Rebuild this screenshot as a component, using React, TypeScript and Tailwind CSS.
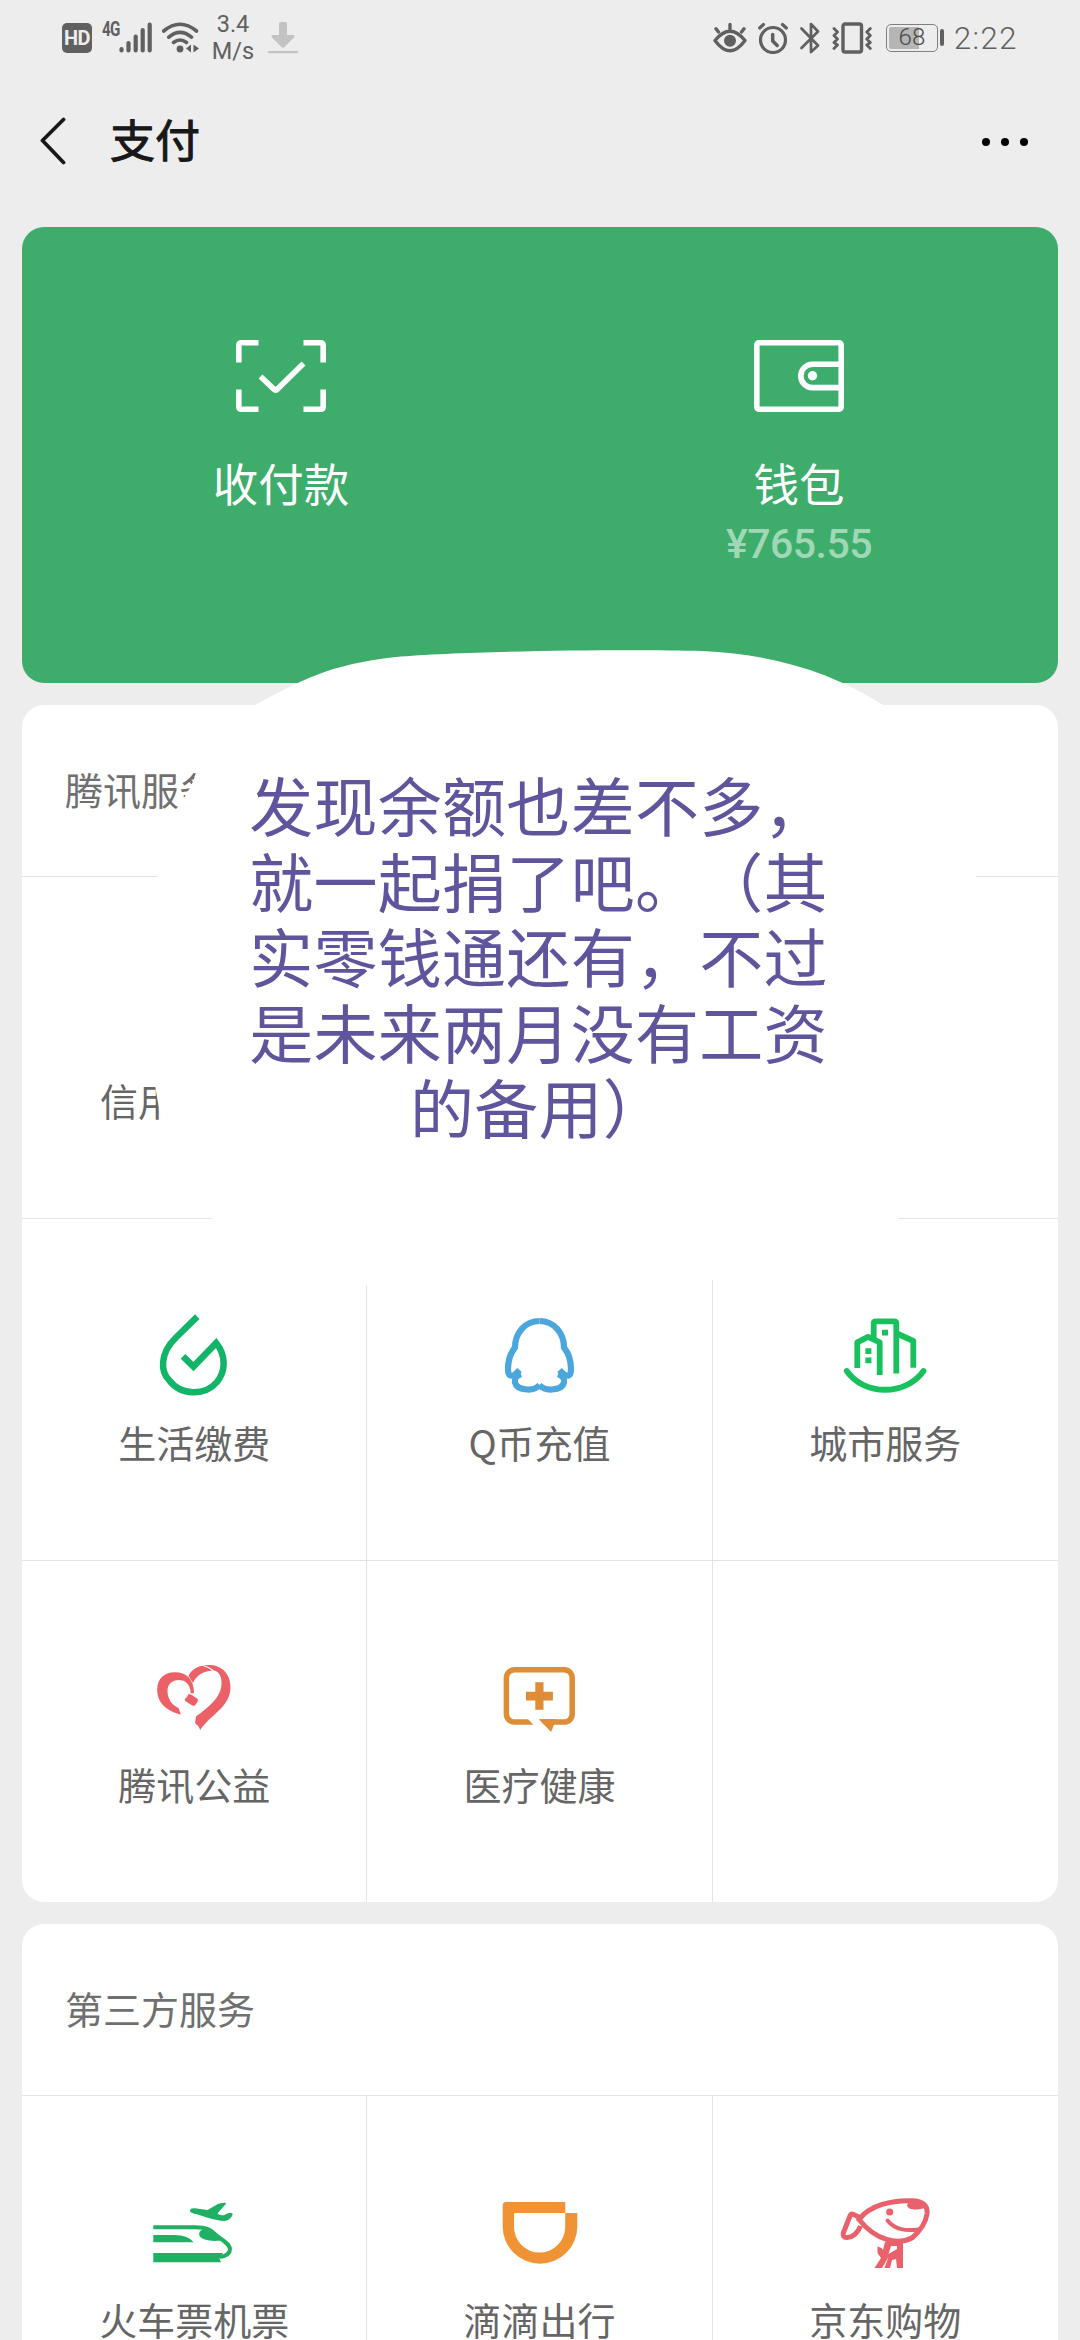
import { ReactNode } from 'react';

interface Service {
  label: string;
  icon: ReactNode;
}

function WaterIcon() {
  return (
    <svg viewBox="0 0 90 90" className="size-[90px]" fill="none" stroke="#12b568" strokeWidth="6.5">
      <path d="M48.3 6.7 27 27.500C10 44 12 62 20 70C32 86 56 86 68 72C77 61 77 45 67.200 33L44.5 56.6 34 46.4" strokeMiterlimit="10" />
    </svg>
  );
}

function PenguinIcon() {
  const half = (
    <>
      <path d="M45.5 11C31 11 21 23 21 37.5C15 45 14 52 14 59C14 67 18 68.500 25.500 60" />
      <path d="M27 64C18 67 18 78.500 33 79.500C39 79.800 43 78 45.700 75" />
    </>
  );
  return (
    <svg viewBox="0 0 90 90" className="size-[90px]" fill="none" stroke="#4ba6dc" strokeWidth="6.2">
      {half}
      <g transform="translate(91 0) scale(-1 1)">{half}</g>
    </svg>
  );
}

function CityIcon() {
  return (
    <svg viewBox="0 0 90 90" className="size-[90px]" fill="none" stroke="#19c05e" strokeWidth="5.8">
      <path d="M6.800 61C24 86 66 86 83.500 61" strokeLinecap="round" />
      <path d="M33.700 29V13.500Q33.700 11.300 36 11.300H54Q56.300 11.300 56.300 13.500V63.500" />
      <path d="M17.300 58V32.300L28 26.800 39.700 32.300V65" strokeLinejoin="round" />
      <path d="M57 23.500 73.300 31V57.800" strokeLinejoin="round" />
      <path d="M42 19.700h6v5.800h-6zM25.400 38.300h6v5.800h-6zM25.400 47.500h6v5.800h-6z" fill="#19c05e" stroke="none" />
    </svg>
  );
}

function HeartIcon() {
  return (
    <svg viewBox="0 0 90 90" className="size-[90px]" fill="#ec6168">
      <path d="M31.900 62.500C20 60 8.200 52 8.200 38C8.200 26 16 20.300 26 20.300C37 20.300 45 27 45 41L41.800 41.500C41.500 32 36 28 30 28C23 28 18.500 32 18.500 39C18.500 47 23 53 29.500 56Z" />
      <rect x="36" y="43.500" width="12.500" height="8.500" rx="3" transform="rotate(32 42 48)" />
      <path d="M36.500 46.500l2.500-4" stroke="#fff" strokeWidth="1" />
      <path d="M39.500 23.700C43 16 52 12.500 61 13C74 13.500 81.500 23 81.500 35C81.500 55 62 62 51.200 78C50 74 48 73 46 71L47 64.500C60 55 73 45 72.500 30C72.300 22 68 18 63.500 18.500C54 19 47 24 44 31Z" />
      <path d="M54 13.500Q60 15 64.500 18.800" fill="none" stroke="#fff" strokeWidth="1.200" />
    </svg>
  );
}

function MedicalIcon() {
  return (
    <svg viewBox="0 0 90 90" className="size-[90px]" fill="#de8c35">
      <rect x="12.400" y="17.800" width="65.800" height="52.300" rx="8" fill="none" stroke="#de8c35" strokeWidth="5.500" />
      <path d="M33.500 66.500H44.500L51 74H40.500Z" fill="#fff" />
      <path d="M45 67.300H62L60 72.800 57 80Z" />
      <path d="M41.300 30.300h8.200v9.400h9.400v8.700h-9.400v9.400h-8.200v-9.400H32v-8.700h9.300z" />
    </svg>
  );
}

function TrainIcon() {
  return (
    <svg viewBox="0 0 90 90" className="size-[90px]" fill="#20b064">
      <path d="M41 24C41 21.500 43 21 46 21.300L58.600 23C63 21 68 16.500 72 16.300C74 15.800 77 15.500 77 16.700L68.600 26.300C70 28.500 73 28.500 75.500 28C79 25.500 83 25.800 83.600 26.800C84 29 80 34 75.300 34C66 33.500 55 29.500 47 27Q41.500 26 41 24Z" />
      <path d="M4.300 40.300H46C58 40.300 62 43 68 49C75 54 81 58 81 62C81 67 77 69 71 70" fill="none" stroke="#20b064" strokeWidth="4" />
      <path d="M54 42C47 46 50 52 59 53.300C65 54.300 70 54 73 53L63 44Z" />
      <path d="M4.300 48H25C35 48 41 51 44.600 55.300H4.300Z" />
      <path d="M4.300 66H74L70.500 71.500 72 75.300H4.300Z" />
    </svg>
  );
}

function DidiIcon() {
  return (
    <svg viewBox="0 0 90 90" className="size-[90px]" fill="#ef9334">
      <path
        fillRule="evenodd"
        d="M8.700 18.500Q8.700 15 12.200 15H71.300V26H83.300V39.400A37.300 37.300 0 0 1 8.700 39.400ZM20 27V40A25.600 25.600 0 0 0 71.200 40V26H21Q20 26 20 27Z"
      />
    </svg>
  );
}

function DogIcon() {
  return (
    <svg viewBox="0 0 90 90" className="size-[90px]" fill="none" stroke="#e9626b" strokeWidth="5">
      <path d="M19 32.500C30 18 52 13 72 13.700C83 14 88 19 87 27C85.500 37 79 45 72 51C58 58 36 54 19 32.500Z" />
      <path d="M20 30.500 13 27.300Q11 26.500 10 29L3.300 46Q2.500 50.500 6.500 50.500C12 51 18 46 20.500 39" />
      <path d="M47.500 33.500C55 43 66 44 79 42.500" strokeWidth="4" strokeLinecap="round" />
      <circle cx="49.700" cy="25" r="3.500" fill="#e9626b" stroke="none" />
      <path d="M67 18C67 23 78 24 85 20.500L83 14 70 13Z" fill="#e9626b" stroke="none" />
      {/* legs and tail */}
      <path
        d="M45 55H63V81H57L56 72 52 73 50 81H44.500L48.500 70 42 81H34.500L41 71 37.500 66V59.500L41.500 61 43 63ZM51 59 48.500 67 57 62V59Z"
        fill="#e9626b"
        fillRule="evenodd"
        stroke="none"
      />
    </svg>
  );
}

const tencentServices: Service[] = [
  { label: '生活缴费', icon: <WaterIcon /> },
  { label: 'Q币充值', icon: <PenguinIcon /> },
  { label: '城市服务', icon: <CityIcon /> },
];

const moreServices: Service[] = [
  { label: '腾讯公益', icon: <HeartIcon /> },
  { label: '医疗健康', icon: <MedicalIcon /> },
];

const thirdParty: Service[] = [
  { label: '火车票机票', icon: <TrainIcon /> },
  { label: '滴滴出行', icon: <DidiIcon /> },
  { label: '京东购物', icon: <DogIcon /> },
];

function Cell({ label, icon }: Service) {
  return (
    <div className="flex flex-col items-center gap-[14px] pt-[91px]">
      {icon}
      <span className="text-[38px] leading-[56px] whitespace-nowrap text-[#666]">{label}</span>
    </div>
  );
}

function StatusBar() {
  return (
    <div className="flex h-[75px] items-center justify-between pr-[62px] pl-[62px] text-[#606060]">
      <div className="flex items-center">
        <div className="flex size-[30px] items-center justify-center rounded-[5px] bg-[#606060] font-['Roboto',sans-serif] text-[20px] font-bold tracking-[-0.500px] text-[#ededed]">
          HD
        </div>
        <span className="mb-[18px] ml-[10px] w-[18px] font-['Roboto',sans-serif] text-[20px] leading-[18px] font-bold tracking-[-1px]">
          <span className="inline-block origin-left scale-x-[0.76]">4G</span>
        </span>
        <svg viewBox="0 0 33 31" className="-ml-px h-[31px] w-[33px]" stroke="currentColor" strokeWidth="4.200" strokeLinecap="round">
          <path d="M2.500 27v1.500M9.500 21v7.500M16.700 14.500v14M23.700 8v20.500M30.700 2.500v26" />
        </svg>
        <svg viewBox="0 0 37 31" className="ml-[10px] h-[31px] w-[37px]" fill="none" stroke="currentColor" strokeWidth="3.600" strokeLinecap="round">
          <path d="M1.700 9Q18 -4.500 34.500 9M6.800 15.200Q18 5.500 29.500 15.200M11.500 20.500Q18 15.500 24.500 20.500" />
          <circle cx="18" cy="27" r="3.400" fill="currentColor" stroke="none" />
          <path d="M29 22.500v8l-5-4zM31.500 22.500v8l5.500-4z" fill="currentColor" stroke="none" />
        </svg>
        <div className="ml-[12px] w-[44px] text-center font-['Roboto',sans-serif] text-[23.500px] leading-[27px]">
          <div>3.4</div>
          <div>M/s</div>
        </div>
        <svg viewBox="0 0 30 32" className="ml-[13px] h-[32px] w-[30px] text-[#c3c3c3]" fill="currentColor">
          <path d="M12.500 0h5q1.500 0 1.500 1.500V13h6q2.500 0.500 1 2.500L16.500 25q-1.500 1.500-3 0L4 15.500q-1.500-2 1-2.500h6V1.500Q11 0 12.500 0z" />
          <rect y="29" width="30" height="2.300" rx="1" />
        </svg>
      </div>
      <div className="flex items-center">
        <svg viewBox="0 0 34 32" className="h-[32px] w-[34px]" fill="none" stroke="currentColor" strokeWidth="3.400" strokeLinecap="round" strokeLinejoin="round">
          <path d="M2 18.500Q17 0 32 18.500Q17 39 2 18.500ZM17 7V2.500M5.500 10 3 6.800M28.500 10 31 6.800" />
          <circle cx="17" cy="18.700" r="6" fill="currentColor" stroke="none" />
        </svg>
        <svg viewBox="0 0 30 32" className="ml-[11px] h-[32px] w-[30px]" fill="none" stroke="currentColor" strokeWidth="3.200" strokeLinecap="round" strokeLinejoin="round">
          <circle cx="15" cy="18" r="12.500" />
          <path d="M14.700 12.500v6.500l4.500 4.500" strokeWidth="3.500" />
          <path d="M1.700 6 5.500 2.500M28.300 6 24.500 2.500" />
        </svg>
        <svg viewBox="0 0 20 32" className="ml-[12px] h-[32px] w-[20px]" fill="none" stroke="currentColor" strokeWidth="2.700" strokeLinecap="round" strokeLinejoin="round">
          <path d="M1.500 6.500 18 23.500 11 30V2l7 7.500L1.500 26" />
        </svg>
        <svg viewBox="0 0 40 32" className="ml-[12px] h-[32px] w-[40px]" fill="none" stroke="currentColor" strokeWidth="3.400" strokeLinecap="round" strokeLinejoin="round">
          <rect x="11" y="2" width="18.500" height="28" rx="2" />
          <path d="M2 6.500 5.500 10 2 13.500 5.500 17 2 20.500 5.500 23 2 26.500M38.300 6.500 34.800 10 38.300 13.500 34.800 17 38.300 20.500 34.800 23 38.300 26.500" strokeWidth="2.800" />
        </svg>
        <div className="ml-[14px] flex h-[28px] w-[52px] items-center rounded-[5px] border-[1.500px] border-[#808080] bg-[linear-gradient(to_right,#b5b5b5_65%,transparent_65%)] bg-origin-content p-[2px] [background-clip:content-box]">
          <span className="w-full text-center font-['Roboto',sans-serif] text-[24px] leading-[23px] font-light text-[#4a4a4a]">68</span>
        </div>
        <div className="ml-[2px] h-[17px] w-[4px] rounded-[2px] bg-[#606060]"></div>
        <span className="ml-[10px] pt-[2px] font-['Roboto',sans-serif] text-[31px] leading-[36px] font-light tracking-[1.500px]">2:22</span>
      </div>
    </div>
  );
}

function NavBar() {
  return (
    <div className="flex h-[132px] items-center justify-between pr-[52px] pl-[40px]">
      <div className="flex items-center">
        <svg viewBox="0 0 26 48" className="h-[48px] w-[26px]" fill="none" stroke="#181818" strokeWidth="3.800" strokeLinecap="round" strokeLinejoin="round">
          <path d="M23.500 2.500 2.500 23.500l21 22" />
        </svg>
        <h1 className="mb-[4px] ml-[44px] text-[45px] leading-[60px] text-[#181818] [-webkit-text-stroke:1px_#181818]">支付</h1>
      </div>
      <div className="flex gap-[10.600px] pt-[2px]">
        <span className="size-[8.300px] rounded-full bg-black"></span>
        <span className="size-[8.300px] rounded-full bg-black"></span>
        <span className="size-[8.300px] rounded-full bg-black"></span>
      </div>
    </div>
  );
}

function Note() {
  return (
    <div className="absolute top-[-55px] left-0 h-[652px] w-full">
      <svg viewBox="0 0 1036 652" className="absolute inset-0 size-full" fill="#fff">
        <path d="M233 55C280 30 305 15 374 7C440 1 600 -1 680 1C750 4 810 22 861 55C920 90 954 150 954 227C954 400 950 500 876 569C820 620 760 630 690 630C600 650 450 650 345 636C280 620 230 600 190 569C150 530 138 500 138 465L133 435C120 380 136 300 136 227C138 190 157 185 159 158C160 145 175 135 175 112C190 80 210 70 233 55Z" />
      </svg>
      <p className="relative pt-[116px] pr-[3px] text-center text-[64px] leading-[75.600px] tracking-[0.300px] whitespace-nowrap text-[#5f559d] [text-spacing-trim:space-all]">
        发现余额也差不多，
        <br />
        就一起捐了吧。（其
        <br />
        实零钱通还有，不过
        <br />
        是未来两月没有工资
        <br />
        的备用）
      </p>
    </div>
  );
}

export default function App() {
  return (
    <div className="h-[2340px] w-[1080px] overflow-hidden bg-[#ededed] font-['Noto_Sans_CJK_SC',sans-serif]">
      <StatusBar />
      <NavBar />
      <div className="flex flex-col gap-[22px] px-[22px] pt-5">
        <div className="grid h-[456px] grid-cols-2 rounded-[22px] bg-[#3ead6b] text-white">
          <div className="flex flex-col items-center pt-[113px]">
            <svg viewBox="0 0 90 72" className="h-[72px] w-[90px]" fill="none" stroke="currentColor" strokeWidth="5.600">
              <path d="M2.800 22.500V5.500Q2.800 2.800 5.500 2.800H22.500M67.500 2.800H84.500Q87.200 2.800 87.200 5.500V22.500M87.200 49.500V66.500Q87.200 69.200 84.500 69.200H67.500M22.500 69.200H5.500Q2.800 69.200 2.800 66.500V49.500" />
              <path d="M24.500 36.500 38.200 49.500Q39.500 51 41 49.500L67.500 23.500" />
            </svg>
            <span className="mt-[40px] text-[45.500px] leading-[60px]">收付款</span>
          </div>
          <div className="flex flex-col items-center pt-[113px]">
            <svg viewBox="0 0 90 72" className="h-[72px] w-[90px]" fill="none" stroke="currentColor" strokeWidth="5.600">
              <rect x="2.800" y="2.800" width="84.400" height="66.400" rx="2" />
              <path d="M87 24.200H58.500A11.600 11.600 0 0 0 58.500 47.600H87" />
              <circle cx="58.500" cy="35.800" r="4.700" fill="currentColor" stroke="none" />
            </svg>
            <span className="mt-[40px] text-[45.500px] leading-[60px]">钱包</span>
            <span className="mt-[7px] font-['Roboto',sans-serif] text-[41px] leading-[50px] font-medium tracking-[-0.500px] text-[#a0d7b6]">¥765.55</span>
          </div>
        </div>

        <div className="relative rounded-[22px] bg-white">
          <div className="h-[172px] border-b border-[#e3e3e3] pt-[56px] pl-[43px] text-[38px] leading-[56px] text-[#707070]">腾讯服务</div>
          <div className="h-[342px] border-b border-[#e3e3e3] pt-[195px] pl-[78px] text-[38px] leading-[56px] text-[#666]">信用</div>
          <div className="grid h-[342px] grid-cols-3 divide-x divide-[#e3e3e3] border-b border-[#e3e3e3]">
            {tencentServices.map((s) => (
              <Cell key={s.label} {...s} />
            ))}
          </div>
          <div className="grid h-[341px] grid-cols-3 divide-x divide-[#e3e3e3]">
            {moreServices.map((s) => (
              <Cell key={s.label} {...s} />
            ))}
            <div></div>
          </div>
          <Note />
        </div>

        <div className="rounded-t-[22px] bg-white">
          <div className="h-[172px] border-b border-[#e3e3e3] pt-[56px] pl-[43px] text-[38px] leading-[56px] text-[#707070]">第三方服务</div>
          <div className="grid h-[342px] grid-cols-3 divide-x divide-[#e3e3e3]">
            {thirdParty.map((s) => (
              <Cell key={s.label} {...s} />
            ))}
          </div>
        </div>
      </div>
    </div>
  );
}
